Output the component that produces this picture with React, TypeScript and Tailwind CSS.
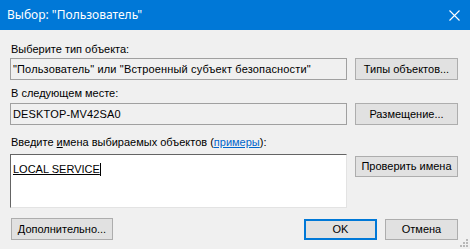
import React from 'react'

const ui = { fontFamily: '"Liberation Sans", Arial, sans-serif' }

function WinButton({ children, className = '', focused = false }: { children: React.ReactNode; className?: string; focused?: boolean }) {
  return (
    <button
      className={
        'flex items-center justify-center bg-[#e1e1e1] text-[11px] text-black ' +
        (focused ? 'border-2 border-[#0078d7] ' : 'border border-[#adadad] ') +
        className
      }
      style={ui}
    >
      {children}
    </button>
  )
}

function ReadOnlyBox({ children }: { children: React.ReactNode }) {
  return (
    <div className="flex h-[22px] w-[337px] items-center border border-[#a0a0a0] bg-[#f0f0f0] pl-[2px] text-[11px] tracking-[0.15px] text-black">
      {children}
    </div>
  )
}

export default function App() {
  return (
    <div className="flex h-[249px] w-[470px] flex-col overflow-hidden bg-[#f0f0f0]" style={ui}>
      <div className="flex h-[30px] items-center justify-between bg-[#0078d7] pl-[7px] pr-[10px] text-white">
        <span className="text-[12px]" style={{ fontFamily: '"Noto Sans", "Open Sans", sans-serif' }}>
          Выбор: "Пользователь"
        </span>
        <svg width="11" height="11" viewBox="0 0 11 11">
          <path d="M0.5 0.5 L10.5 10.5 M10.5 0.5 L0.5 10.5" stroke="white" strokeWidth="1.1" />
        </svg>
      </div>

      <div className="flex flex-1 flex-col pl-[10px] pr-[12px]">
        <div className="mt-[13px] h-[13px] pl-[1px] text-[11px] leading-[13px] text-black">Выберите тип объекта:</div>
        <div className="mt-[2px] flex gap-[8px]">
          <ReadOnlyBox>"Пользователь" или "Встроенный субъект безопасности"</ReadOnlyBox>
          <WinButton className="h-[22px] w-[103px]">Типы объектов...</WinButton>
        </div>

        <div className="mt-[7px] h-[13px] pl-[1px] text-[11px] leading-[13px] text-black">В следующем месте:</div>
        <div className="mt-[3px] flex gap-[8px]">
          <ReadOnlyBox>DESKTOP-MV42SA0</ReadOnlyBox>
          <WinButton className="h-[22px] w-[103px]">Размещение...</WinButton>
        </div>

        <div className="mt-[11px] h-[13px] pl-[1px] text-[11px] leading-[13px] text-black">
          Введите <span className="underline">и</span>мена выбираемых объектов (<span className="text-[#0066cc] underline">примеры</span>):
        </div>
        <div className="mt-[5px] flex gap-[8px]">
          <div className="h-[54px] w-[337px] border-t border-l border-t-[#646464] border-l-[#646464] border-r border-b border-r-[#e3e3e3] border-b-[#e3e3e3] bg-white pl-[2px] pt-[1px]">
            <span className="inline-flex items-end border-r border-black text-[11px] leading-[13px] text-black underline">
              LOCAL SERVICE
            </span>
          </div>
          <WinButton className="mt-[2px] h-[21px] w-[103px]">Проверить имена</WinButton>
        </div>

        <div className="mt-[10px] flex items-center">
          <WinButton className="ml-[1px] h-[22px] w-[102px]">Дополнительно...</WinButton>
          <div className="flex-1" />
          <WinButton focused className="h-[21px] w-[73px]">OK</WinButton>
          <WinButton className="ml-[8px] h-[21px] w-[73px]">Отмена</WinButton>
        </div>
      </div>
      <div className="relative">
        <svg width="8" height="8" viewBox="0 0 8 8" className="absolute bottom-[2px] right-[2px]">
          <rect x="6" y="0" width="2" height="2" fill="#b8b8b8" />
          <rect x="3" y="3" width="2" height="2" fill="#b8b8b8" />
          <rect x="6" y="3" width="2" height="2" fill="#b8b8b8" />
          <rect x="0" y="6" width="2" height="2" fill="#b8b8b8" />
          <rect x="3" y="6" width="2" height="2" fill="#b8b8b8" />
          <rect x="6" y="6" width="2" height="2" fill="#b8b8b8" />
        </svg>
      </div>
    </div>
  )
}
